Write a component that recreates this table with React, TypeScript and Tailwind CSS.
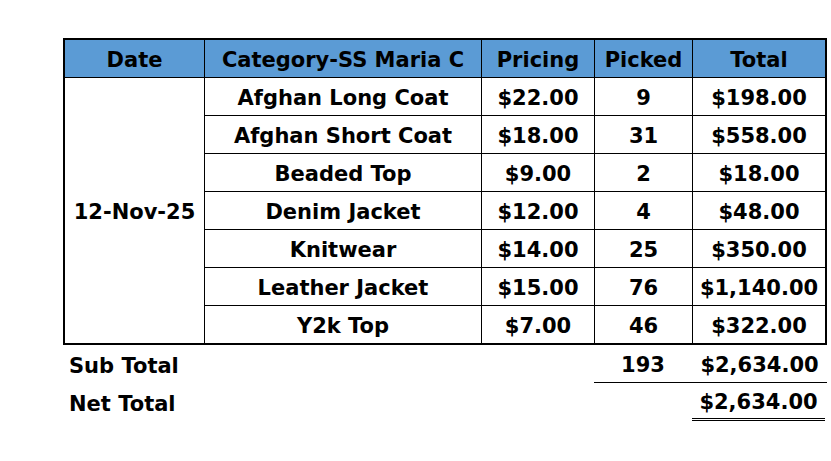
const ROWS = [
  { category: 'Afghan Long Coat', pricing: '$22.00', picked: '9', total: '$198.00' },
  { category: 'Afghan Short Coat', pricing: '$18.00', picked: '31', total: '$558.00' },
  { category: 'Beaded Top', pricing: '$9.00', picked: '2', total: '$18.00' },
  { category: 'Denim Jacket', pricing: '$12.00', picked: '4', total: '$48.00' },
  { category: 'Knitwear', pricing: '$14.00', picked: '25', total: '$350.00' },
  { category: 'Leather Jacket', pricing: '$15.00', picked: '76', total: '$1,140.00' },
  { category: 'Y2k Top', pricing: '$7.00', picked: '46', total: '$322.00' },
];

const cell = 'flex items-center justify-center pt-[3px] whitespace-nowrap';

export default function App() {
  return (
    <div
      className="w-[831px] h-[461px] bg-white text-black font-bold text-[21px] leading-[24px] overflow-hidden"
      style={{ fontFamily: '"DejaVu Sans", "Liberation Sans", sans-serif' }}
    >
      <div className="ml-[63px] pt-[38px]">
        {/* Main table */}
        <div className="w-[764px] border-2 border-black">
          {/* Header */}
          <div className="grid grid-cols-[139px_277px_113px_98px_133px] h-[38px] bg-[#5b9bd5] border-b border-black">
            <div className={cell}>Date</div>
            <div className={`${cell} border-l border-black`}>Category-SS Maria C</div>
            <div className={`${cell} border-l border-black`}>Pricing</div>
            <div className={`${cell} border-l border-black`}>Picked</div>
            <div className={`${cell} border-l border-black`}>Total</div>
          </div>

          {/* Body */}
          <div className="flex">
            <div className={`${cell} w-[139px]`}>12-Nov-25</div>
            <div className="flex flex-col">
              {ROWS.map((row, i) => (
                <div
                  key={row.category}
                  className={`grid grid-cols-[277px_113px_98px_133px] ${
                    i < ROWS.length - 1 ? 'h-[38px] border-b border-black' : 'h-[37px]'
                  }`}
                >
                  <div className={`${cell} border-l border-black`}>{row.category}</div>
                  <div className={`${cell} border-l border-black`}>{row.pricing}</div>
                  <div className={`${cell} border-l border-black`}>{row.picked}</div>
                  <div className={`${cell} border-l border-black`}>{row.total}</div>
                </div>
              ))}
            </div>
          </div>
        </div>

        {/* Sub total */}
        <div className="grid grid-cols-[531px_98px_135px] h-[38px]">
          <div className="flex items-center pl-[6px] pt-[3px]">Sub Total</div>
          <div className={`${cell} border-b border-black`}>193</div>
          <div className={`${cell} border-b border-black`}>$2,634.00</div>
        </div>

        {/* Net total */}
        <div className="grid grid-cols-[531px_98px_133px] h-[38px]">
          <div className="flex items-center pl-[6px] pt-[3px]">Net Total</div>
          <div />
          <div className={`${cell} border-b-[3px] border-double border-black`}>$2,634.00</div>
        </div>
      </div>
    </div>
  );
}
